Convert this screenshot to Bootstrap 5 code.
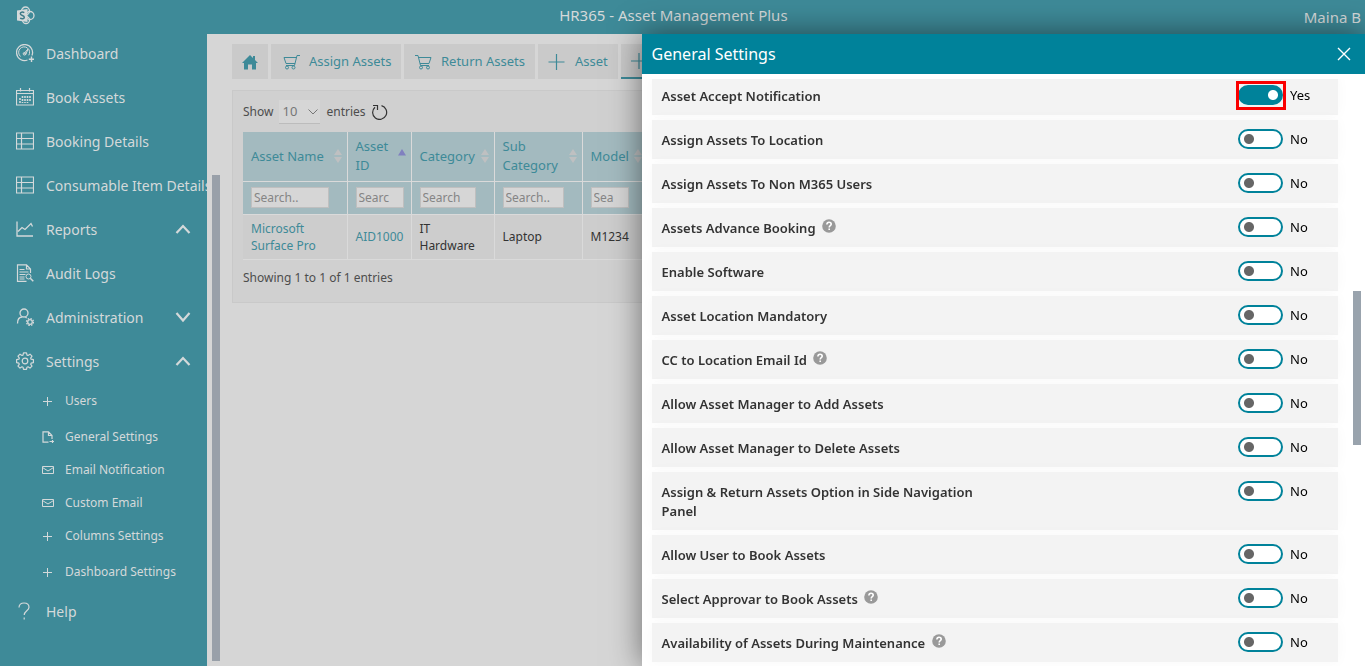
<!DOCTYPE html>
<html lang="en">
<head>
<meta charset="utf-8">
<meta name="viewport" content="width=device-width, initial-scale=1">
<title>HR365 - Asset Management Plus</title>
<link href="https://cdn.jsdelivr.net/npm/bootstrap@5.3.0/dist/css/bootstrap.min.css" rel="stylesheet">
<style>
:root{--teal:#00829a;--dim-teal:#3e8a98;--dim-text:#d4d9da;--dim-bg:#d6d6d6}
body{font-family:"Noto Sans","Open Sans",sans-serif;font-size:14px;background:var(--dim-bg);height:100vh;overflow:hidden}
svg{flex:none}
.topbar{background:var(--dim-teal);color:var(--dim-text);height:31px;font-size:15px;padding:0 4px 0 16px}
.side{width:207px;background:var(--dim-teal);overflow:hidden;flex:none}
.side a{color:var(--dim-text);text-decoration:none;white-space:nowrap}
.side-link{height:44px;padding-left:16px;gap:12px}
.side-link .chev{position:absolute;left:175px}
.sub-menu{padding:1px 0}
.sub-link{height:33px;padding-left:42px;gap:11px;font-size:12px}
.sub-gap{margin-top:3px}
.work{border-top:3px solid var(--dim-teal);overflow:hidden}
.side-track{width:8px;margin:0 12px 5px 5px;padding-top:141px}
.thumb{background:#99a0a9}
.tool{height:35px;background:#cacaca;color:var(--dim-teal);border:0;font-size:13px;white-space:nowrap;flex:none}
.tool.current{border-bottom:2px solid var(--dim-teal)}
.sheet{margin-top:11px;padding:9px 10px;border:1px solid #c9c9c9;background:#d0d0d0;height:213px;color:#4d4d4d;font-size:12px}
.count{width:41px;height:24px;border:0;border-bottom:1px solid #bcbcbc;background:#d6d6d6;color:#777;appearance:none;padding:0 0 0 3px;font-size:13px}
.grid{table-layout:fixed;margin:8px 0 0;width:100%;border-collapse:collapse;color:#333}
.grid th,.grid td{border-right:1px solid #dadada;border-bottom:1px solid #dadada;padding:0 7px 0 8px;vertical-align:middle;line-height:17px}
.grid thead th{background:#a3babf;color:var(--dim-teal);font-weight:400;font-size:13px;line-height:19px}
.grid thead tr:first-child{height:49px}
.grid thead tr:first-child svg{margin-right:-2px}
.grid thead tr:last-child{height:33px}
.grid thead .wide-pad{padding-right:18px}
.grid tbody tr{height:45px;background:#cdcdcd}
.grid a{color:var(--dim-teal);text-decoration:none}
.grid input{display:block;height:21px;width:100%;border:1px solid #bfbfbf;background:#d6d6d6;padding:0 2px;font-size:12px}
.grid input::placeholder{color:#858585}
.panel{top:34px;width:53%;background:#fff;box-shadow:0 0 30px rgba(0,0,0,.5);color:#333}
.panel-top{background:var(--teal);color:#fff;height:40px;padding:0 14px 0 10px;font-size:16px}
.panel-body{margin:5px 0 0;padding:0 27px 0 10px;overflow:hidden;flex:1}
.opts{margin-top:-3px}
.opt{background:#f3f3f3;box-shadow:0 0 14px rgba(0,0,0,.03);padding:11px 10px 9px;margin-bottom:5px;line-height:19px;font-size:13px}
.opt-name{font-weight:600;width:50%}
.opt-name svg{margin:-6px 0 0 3px}
.opt-set{width:90px;gap:7px;color:#000;height:19px;margin-top:-2px;line-height:21px}
.switch{appearance:none;display:block;margin:0;width:45px;height:20px;border:2px solid var(--teal);border-radius:10px;background:#fff radial-gradient(circle at 9px 8px,#666 4.5px,transparent 5.5px)}
.switch:checked{background:var(--teal) radial-gradient(circle at 33px 8px,#fff 4.5px,transparent 5.5px)}
.marked::after{content:"";position:absolute;inset:-4px -3px -5px -2px;border:3px solid #fa0000}
.marked{height:20px}
.panel-thumb{right:4px;top:257px;width:8px;height:154px;background:#99a3ad}
</style>
</head>
<body class="d-flex flex-column">
<svg class="d-none" aria-hidden="true">
<defs>
<symbol id="i-table" viewBox="0 0 18 18"><g fill="none" stroke="currentColor"><path d="M.5 1h17v16H.5zM.5 6.5h17M.5 12h17M5.5 1v16" stroke-width="1.2"/></g></symbol>
<symbol id="i-up" viewBox="0 0 16 16"><path d="M1.5 12 8 5l6.500 7" fill="none" stroke="currentColor" stroke-width="2.200"/></symbol>
<symbol id="i-down" viewBox="0 0 16 16"><path d="M1.500 4 8 11.500l6.500-7.500" fill="none" stroke="currentColor" stroke-width="2.200"/></symbol>
<symbol id="i-plus" viewBox="0 0 12 12"><path d="M5.500 2v9M1 6.500h9" fill="none" stroke="currentColor"/></symbol>
<symbol id="i-mail" viewBox="0 0 12 12"><path d="M.5 2.500h11v7H.5zM.5 3.500 6 7l5.500-3.500" fill="none" stroke="currentColor"/></symbol>
<symbol id="i-bigplus" viewBox="0 0 16 16"><path d="M8 0v16M0 8h16" fill="none" stroke="currentColor" stroke-width="1.200"/></symbol>
<symbol id="i-sort" viewBox="0 0 8 14"><path d="M4 0l4 6H0zM4 14l4-6H0z" fill="#bfc0c1"/></symbol>
<symbol id="i-help" viewBox="0 0 14 14"><circle cx="7" cy="7" r="6.800" fill="#999"/><path d="M4.900 5.600C4.900 4 5.700 3.300 7 3.300s2.200.8 2.200 1.900C9.200 6.600 7.200 6.700 7.200 8.400M7.200 9.500v1.500" fill="none" stroke="#fff" stroke-width="1.600"/></symbol>
</defs>
</svg>

<header class="topbar d-flex align-items-center position-relative flex-shrink-0">
<svg width="19" height="19" viewBox="0 0 19 19" role="img" aria-label="SharePoint"><g fill="none" stroke="#d4d9da" stroke-width="1.300"><circle cx="9.500" cy="5" r="4"/><circle cx="14" cy="9.500" r="4"/><circle cx="10" cy="14" r="3.500"/></g><path d="M1 4.500l10.500-1.500v13L1 14.500z" fill="#d4d9da"/><path d="M8.300 6.700C6.500 5.700 4.300 6 4.300 7.700c0 2 4 1.500 4 3.500 0 1.700-2.400 2-4.200 1" fill="none" stroke="#3e7a88" stroke-width="1.500"/></svg>
<span class="flex-grow-1 text-center ps-2">HR365 - Asset Management Plus</span>
<span class="pt-1">Maina B</span>
</header>

<div class="d-flex flex-grow-1 overflow-hidden">
<nav class="side" aria-label="Main">
<a href="#" class="side-link d-flex align-items-center"><svg width="18" height="18" viewBox="0 0 18 18" fill="none" stroke="currentColor"><path d="M16 11.500A8 8 0 1 0 11.500 16" stroke-width="1.300"/><path d="M4.500 12.500a5.500 5.500 0 1 1 8.300-1.200M8 9.500l4-4.500-2.200 5.500z"/><circle cx="8.500" cy="9.800" r="1.300"/><path d="M15.500 12.500V18M12.800 15.300H18" stroke-width="1.400"/></svg>Dashboard</a>
<a href="#" class="side-link d-flex align-items-center"><svg width="18" height="18" viewBox="0 0 18 18" fill="none" stroke="currentColor"><path d="M.5 2.500h17v14.500H.5zM.5 5.500h17M4.500 0v3.500M13.500 0v3.500" stroke-width="1.200"/><path d="M4 10v5M6.500 8v7M9 8v7M11.500 8v7M14 8v5" stroke-width="1.600" stroke-dasharray="2 1"/></svg>Book Assets</a>
<a href="#" class="side-link d-flex align-items-center"><svg width="18" height="18"><use href="#i-table"/></svg>Booking Details</a>
<a href="#" class="side-link d-flex align-items-center"><svg width="18" height="18"><use href="#i-table"/></svg>Consumable Item Details</a>
<a href="#" class="side-link d-flex align-items-center position-relative"><svg width="18" height="18" viewBox="0 0 18 18" fill="none" stroke="currentColor" stroke-width="1.300"><path d="M1 1.500v14.500h16M2 11.500l4-4 3 2 6-6 1.500 3"/></svg>Reports<svg class="chev" width="16" height="16"><use href="#i-up"/></svg></a>
<a href="#" class="side-link d-flex align-items-center"><svg width="18" height="18" viewBox="0 0 18 18" fill="none" stroke="currentColor"><path d="M14.500 9V5L10.500.8H1.500v16.500h9M10.500 1v4h4M3.500 5.500h5M3.500 8h9M3.500 10.500h6M3.500 13h5M3.500 15h5" stroke-width="1.200"/><circle cx="12.500" cy="12.500" r="2.500"/><path d="M14.300 14.300l3 3" stroke-width="1.500"/></svg>Audit Logs</a>
<a href="#" class="side-link d-flex align-items-center position-relative"><svg width="18" height="18" viewBox="0 0 18 18" fill="none" stroke="currentColor" stroke-width="1.300"><circle cx="8" cy="5" r="4"/><path d="M1.500 15.500c0-4 2-6.500 5-6.500"/><path d="M9.300 9.200l1.500.8"/><circle cx="14" cy="14" r="2.300"/><circle cx="14" cy="14" r="3.500" stroke-dasharray="1.500 1.250"/></svg>Administration<svg class="chev" width="16" height="16"><use href="#i-down"/></svg></a>
<a href="#" class="side-link d-flex align-items-center position-relative"><svg width="18" height="18" viewBox="0 0 18 18" fill="none" stroke="currentColor"><circle cx="9" cy="9" r="2.800" stroke-width="1.200"/><path stroke-width="1.200" stroke-linejoin="round" d="M7.500.8h3l.5 2.300 1 .4 2-1.300 2 2-1.300 2 .4 1 2.300.4v3l-2.300.5-.4 1 1.300 2-2 2-2-1.300-1 .4-.5 2.200h-3l-.5-2.200-1-.4-2 1.300-2-2 1.300-2-.4-1-2.300-.5v-3l2.300-.4.4-1-1.300-2 2-2 2 1.300 1-.4z"/></svg>Settings<svg class="chev" width="16" height="16"><use href="#i-up"/></svg></a>
<div class="sub-menu">
<a href="#" class="sub-link d-flex align-items-center"><svg width="12" height="12"><use href="#i-plus"/></svg>Users</a>
<a href="#" class="sub-link sub-gap d-flex align-items-center"><svg width="12" height="12" viewBox="0 0 12 12" fill="none" stroke="currentColor" stroke-width="1.200"><path d="M6.500 11.200H1V.8h5.500L10 4.500V8M6.500 1v3.500H10M7.500 10.500H12M10.500 9v3"/></svg>General Settings</a>
<a href="#" class="sub-link d-flex align-items-center"><svg width="12" height="12"><use href="#i-mail"/></svg>Email Notification</a>
<a href="#" class="sub-link d-flex align-items-center"><svg width="12" height="12"><use href="#i-mail"/></svg>Custom Email</a>
<a href="#" class="sub-link d-flex align-items-center"><svg width="12" height="12"><use href="#i-plus"/></svg>Columns Settings</a>
<a href="#" class="sub-link sub-gap d-flex align-items-center"><svg width="12" height="12"><use href="#i-plus"/></svg>Dashboard Settings</a>
</div>
<a href="#" class="side-link d-flex align-items-center"><svg width="18" height="18" viewBox="0 0 18 18" fill="none" stroke="currentColor" stroke-width="1.200"><path d="M3 5.500C3 2.500 5 1 8 1s5 1.500 5 4.200C13 8.500 8.200 9 8.200 13M8.200 15.500v2"/></svg>Help</a>
</nav>

<main class="work d-flex flex-grow-1">
<div class="side-track d-flex flex-column flex-shrink-0"><div class="thumb flex-grow-1"></div></div>
<div class="flex-grow-1 overflow-hidden pe-3" style="padding-top:10px">
<div class="d-flex overflow-hidden" style="gap:3px">
<button class="tool" style="width:36px;padding:0" aria-label="Home"><svg width="16" height="15" viewBox="0 0 16 15"><path d="M8 0L0 8h2v6.500h4V9.500h4v5h4V8h2l-3-3V1h-2v2z" fill="currentColor"/></svg></button>
<button class="tool d-flex align-items-center" style="width:130px;padding:0 12px;gap:9px"><svg width="17" height="16" viewBox="0 0 17 16" fill="none" stroke="currentColor"><path d="M17 1.500h-3L11.500 11.500H3M14 3.500H1l2 6h9"/><circle cx="4" cy="13.500" r="1.500"/><circle cx="10.500" cy="13.500" r="1.500"/></svg>Assign Assets</button>
<button class="tool d-flex align-items-center" style="width:131px;padding:0 11px;gap:9px"><svg width="17" height="16" viewBox="0 0 17 16" fill="none" stroke="currentColor"><path d="M0 1.500h3L5.500 11.500H14M4 3.500h12l-2 6H5"/><circle cx="6" cy="13.500" r="1.500"/><circle cx="13" cy="13.500" r="1.500"/></svg>Return Assets</button>
<button class="tool d-flex align-items-center" style="width:80px;padding:0 10px;gap:10px"><svg width="17" height="16"><use href="#i-bigplus"/></svg>Asset</button>
<button class="tool current d-flex align-items-center" style="width:130px;padding:0 10px" aria-label="Add"><svg width="16" height="16"><use href="#i-bigplus"/></svg></button>
</div>
<section class="sheet">
<div class="d-flex align-items-center" style="gap:6px"><label for="len">Show</label>
<span class="position-relative"><select id="len" class="count d-block"><option>10</option></select><svg class="position-absolute pe-none" style="right:2px;top:8px" width="10" height="8" viewBox="0 0 10 8"><path d="M.5 1.500L5 6l4.500-4.500" fill="none" stroke="#777"/></svg></span>
<span>entries</span>
<svg width="16" height="16" viewBox="0 0 16 16" fill="none" stroke="#333" stroke-width="1.200"><path d="M9.500 1.700A7 7 0 1 1 3 3.200M5.500 6V1.500H1"/></svg></div>
<table class="grid">
<colgroup><col style="width:104px"><col style="width:64px"><col style="width:83px"><col style="width:88px"><col style="width:65px"><col></colgroup>
<thead>
<tr>
<th scope="col"><div class="d-flex align-items-center justify-content-between">Asset Name<svg width="8" height="14"><use href="#i-sort"/></svg></div></th>
<th scope="col"><div class="d-flex align-items-center justify-content-between"><span>Asset<br>ID</span><svg width="8" height="14" viewBox="0 0 8 14"><path d="M4 0l4 6.500H0z" fill="#8080bf"/></svg></div></th>
<th scope="col"><div class="d-flex align-items-center justify-content-between">Category<svg width="8" height="14"><use href="#i-sort"/></svg></div></th>
<th scope="col"><div class="d-flex align-items-center justify-content-between"><span>Sub<br>Category</span><svg width="8" height="14"><use href="#i-sort"/></svg></div></th>
<th scope="col"><div class="d-flex align-items-center justify-content-between">Model<svg width="8" height="14"><use href="#i-sort"/></svg></div></th>
<th></th>
</tr>
<tr>
<th class="wide-pad"><input placeholder="Search.." aria-label="Search asset name"></th>
<th><input placeholder="Searc" aria-label="Search asset ID"></th>
<th class="wide-pad"><input placeholder="Search" aria-label="Search category"></th>
<th class="wide-pad"><input placeholder="Search.." aria-label="Search sub category"></th>
<th class="wide-pad"><input placeholder="Sea" aria-label="Search model"></th>
<th></th>
</tr>
</thead>
<tbody><tr><td><a href="#">Microsoft<br>Surface Pro</a></td><td><a href="#">AID1000</a></td><td>IT<br>Hardware</td><td>Laptop</td><td>M1234</td><td></td></tr></tbody>
</table>
<div style="padding-top:9px">Showing 1 to 1 of 1 entries</div>
</section>
</div>
</main>
</div>

<aside class="panel position-fixed end-0 bottom-0 d-flex flex-column" aria-labelledby="panel-title">
<div class="panel-top d-flex align-items-center justify-content-between flex-shrink-0">
<span id="panel-title">General Settings</span>
<button class="border-0 bg-transparent p-0 text-white d-flex" aria-label="Close"><svg width="14" height="14" viewBox="0 0 14 14"><path d="M1 1l12 12M13 1L1 13" stroke="currentColor" stroke-width="1.400"/></svg></button>
</div>
<div class="panel-body">
<div class="opts">
<div class="opt d-flex justify-content-between"><label class="opt-name" for="s1">Asset Accept Notification</label><div class="opt-set d-flex align-items-start"><span class="position-relative marked"><input class="switch" type="checkbox" role="switch" id="s1" checked></span><span>Yes</span></div></div>
<div class="opt d-flex justify-content-between"><label class="opt-name" for="s2">Assign Assets To Location</label><div class="opt-set d-flex align-items-start"><input class="switch" type="checkbox" role="switch" id="s2"><span>No</span></div></div>
<div class="opt d-flex justify-content-between"><label class="opt-name" for="s3">Assign Assets To Non M365 Users</label><div class="opt-set d-flex align-items-start"><input class="switch" type="checkbox" role="switch" id="s3"><span>No</span></div></div>
<div class="opt d-flex justify-content-between"><label class="opt-name" for="s4">Assets Advance Booking <svg width="14" height="14"><use href="#i-help"/></svg></label><div class="opt-set d-flex align-items-start"><input class="switch" type="checkbox" role="switch" id="s4"><span>No</span></div></div>
<div class="opt d-flex justify-content-between"><label class="opt-name" for="s5">Enable Software</label><div class="opt-set d-flex align-items-start"><input class="switch" type="checkbox" role="switch" id="s5"><span>No</span></div></div>
<div class="opt d-flex justify-content-between"><label class="opt-name" for="s6">Asset Location Mandatory</label><div class="opt-set d-flex align-items-start"><input class="switch" type="checkbox" role="switch" id="s6"><span>No</span></div></div>
<div class="opt d-flex justify-content-between"><label class="opt-name" for="s7">CC to Location Email Id <svg width="14" height="14"><use href="#i-help"/></svg></label><div class="opt-set d-flex align-items-start"><input class="switch" type="checkbox" role="switch" id="s7"><span>No</span></div></div>
<div class="opt d-flex justify-content-between"><label class="opt-name" for="s8">Allow Asset Manager to Add Assets</label><div class="opt-set d-flex align-items-start"><input class="switch" type="checkbox" role="switch" id="s8"><span>No</span></div></div>
<div class="opt d-flex justify-content-between"><label class="opt-name" for="s9">Allow Asset Manager to Delete Assets</label><div class="opt-set d-flex align-items-start"><input class="switch" type="checkbox" role="switch" id="s9"><span>No</span></div></div>
<div class="opt d-flex justify-content-between"><label class="opt-name" for="s10">Assign &amp; Return Assets Option in Side Navigation Panel</label><div class="opt-set d-flex align-items-start"><input class="switch" type="checkbox" role="switch" id="s10"><span>No</span></div></div>
<div class="opt d-flex justify-content-between"><label class="opt-name" for="s11">Allow User to Book Assets</label><div class="opt-set d-flex align-items-start"><input class="switch" type="checkbox" role="switch" id="s11"><span>No</span></div></div>
<div class="opt d-flex justify-content-between"><label class="opt-name" for="s12">Select Approvar to Book Assets <svg width="14" height="14"><use href="#i-help"/></svg></label><div class="opt-set d-flex align-items-start"><input class="switch" type="checkbox" role="switch" id="s12"><span>No</span></div></div>
<div class="opt d-flex justify-content-between"><label class="opt-name" for="s13">Availability of Assets During Maintenance <svg width="14" height="14"><use href="#i-help"/></svg></label><div class="opt-set d-flex align-items-start"><input class="switch" type="checkbox" role="switch" id="s13"><span>No</span></div></div>
</div>
</div>
<div class="panel-thumb position-absolute"></div>
</aside>
<script src="https://cdn.jsdelivr.net/npm/bootstrap@5.3.0/dist/js/bootstrap.bundle.min.js"></script>
</body>
</html>
